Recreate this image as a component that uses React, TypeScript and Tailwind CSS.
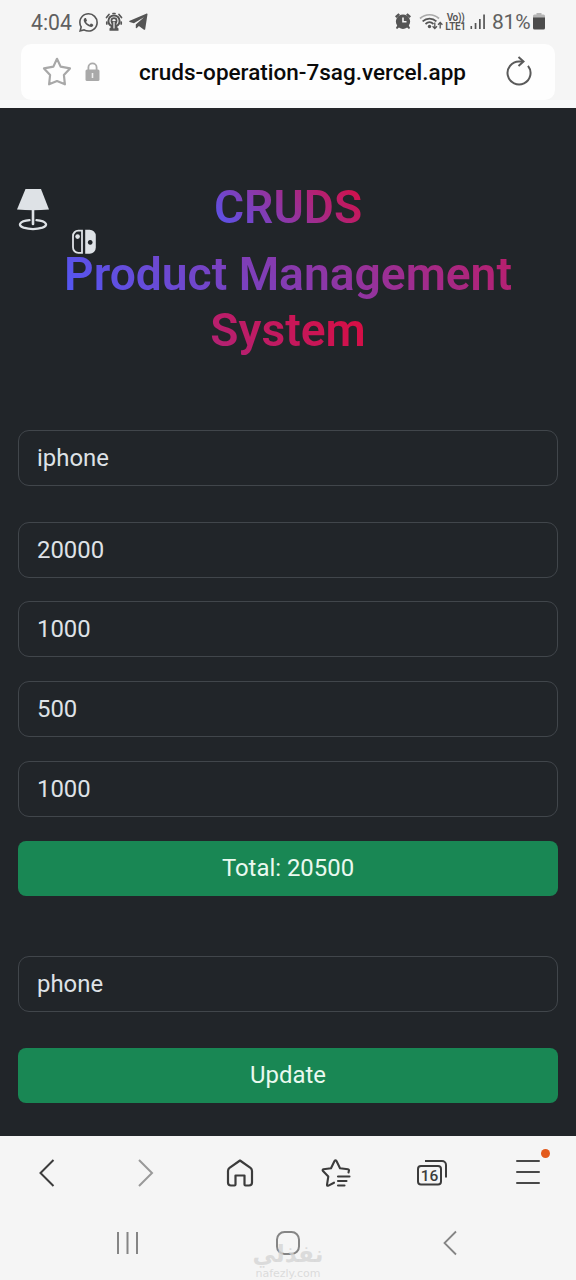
import type { ReactNode } from "react";
import { BsWhatsapp } from "react-icons/bs";

function StatusBar() {
  return (
    <div className="flex h-11 items-center pl-[31px] pr-[30px] text-[#555]">
      <span className="w-[48px] text-[21.200px] leading-[43px] text-[#606060]">4:04</span>
      <BsWhatsapp className="size-[19px]" />
      <svg className="ml-[7px]" width="18" height="20" viewBox="0 0 18 20" fill="none" stroke="currentColor" strokeWidth="1.7" strokeLinecap="round">
        <circle cx="9" cy="9" r="5.600" strokeWidth="2" />
        <circle cx="9" cy="8.800" r="2.600" />
        <path d="M1.500 5.500 4 2.500M16.500 5.500 14 2.500M8 1.500h2M1.800 10V12M16.200 10V12" />
        <path d="M4.500 18.800V16.500L6.500 14.500V9h5v5.500l2 2v2.300Z" fill="currentColor" stroke="none" />
        <path d="M9 10v6" stroke="#f5f5f5" strokeWidth="1.200" />
      </svg>
      <svg className="ml-[6px]" width="19" height="18" viewBox="0 0 19 18" fill="currentColor">
        <path d="M18.500 1.200 16.200 16.200c-.1.700-.7.800-1.200.5L9.900 13l-2.300 2.300-.8-.4V11.600L15 4.200 4.900 10.200.7 8.900c-.8-.3-.8-.9.1-1.200L17.200.7c.8-.3 1.400-.1 1.300.5Z" />
      </svg>
      <div className="ml-auto flex items-center">
        <svg className="-mt-[2px]" width="16" height="17" viewBox="0 0 16 17" fill="currentColor">
          <path d="M0 3.300 3.400.3 5 1.800 1.400 5zM16 3.300 12.600.3 11 1.800 14.600 5z" />
          <path fillRule="evenodd" d="M8 1.500a7 7 0 0 1 5.800 11l1.300 2.500-1.200 1-1.800-1.600a7 7 0 0 1-8.200 0L2.100 16 .9 15l1.300-2.500A7 7 0 0 1 8 1.500Zm-.8 3.100v4.800h4.300V7.900H8.800V4.600Z" />
        </svg>
        <svg className="ml-[8px]" width="24" height="18" viewBox="0 0 24 18" fill="none" stroke="currentColor" strokeWidth="1.700">
          <path d="M1 5.500C6.500.500 14.500.500 20 5.500" stroke="#aaa" />
          <path d="M3.600 8.300c4-3.700 9.800-3.700 13.800 0M6.500 11c2.400-2.200 5.600-2.200 8 0" />
          <circle cx="10.500" cy="13.500" r="1.700" fill="currentColor" stroke="none" />
          <path d="M15.800 9.500v6M13.600 13.300l2.200 2.300 2.200-2.300M21.200 15.500V9.700M19 11.800l2.200-2.300 2.200 2.300" strokeWidth="1.300" />
        </svg>
        <div className="ml-[2px] w-[21px] text-center text-[10px] font-semibold leading-[9px]">
          <div className="whitespace-nowrap tracking-[-0.300px]">Vo))</div>
          <div className="tracking-[-0.300px]">LTE1</div>
        </div>
        <svg className="ml-[4px] -mt-[1px]" width="16" height="16" viewBox="0 0 16 16" fill="currentColor">
          <path d="M.5 12h1.600v3H.5zM4.700 9h1.700V15H4.700zM9 5h1.700V15H9zM13.200.5h1.700V15h-1.700z" />
        </svg>
        <span className="ml-[6px] w-[41px] whitespace-nowrap text-[21px] leading-[44px] tracking-[-0.200px] text-[#606060]">81%</span>
        <svg className="mr-[1px] -mt-[2px]" width="12" height="17" viewBox="0 0 12 17" fill="#4c4c4c">
          <path d="M3.500 0h5v1.500h2A1.500 1.500 0 0 1 12 3v2H0V3a1.500 1.500 0 0 1 1.500-1.500h2Z" fill="#b5b5b5" />
          <path d="M0 4.500h12V15a1.500 1.500 0 0 1-1.500 1.500h-9A1.500 1.500 0 0 1 0 15Z" />
        </svg>
      </div>
    </div>
  );
}

function AddressBar() {
  return (
    <div className="mx-[21px] flex h-[56px] items-center rounded-[10px] bg-[#fefefe] pl-[21px] pr-[22px]">
      <svg width="30" height="30" viewBox="0 0 30 30" fill="none" stroke="#a8a8a8" strokeWidth="2.200" strokeLinejoin="round">
        <path d="M15 1.800 18.600 9.600 28 11.400 21.900 18 22.900 27.300 15 24 7.100 27.300 8.100 18 2 11.400 11.400 9.600Z" />
      </svg>
      <svg className="ml-[13px]" width="15" height="20" viewBox="0 0 15 20" fill="none">
        <path d="M3.400 9V5.500a4.100 4.100 0 0 1 8.200 0V9" stroke="#aaa" strokeWidth="1.800" />
        <rect x=".5" y="7.500" width="14" height="11.500" rx="1.500" fill="#a9a9a9" />
        <path d="M7.500 11v5" stroke="#eee" strokeWidth="1.600" />
      </svg>
      <span className="ml-[39px] whitespace-nowrap pt-[1px] text-[22.500px] font-medium text-[#0a0a0a]">cruds-operation-7sag.vercel.app</span>
      <svg className="-mt-[3px] ml-auto" width="28" height="30" viewBox="0 0 28 30" fill="none" stroke="#5a5a5a" strokeWidth="2">
        <path d="M18 5.500H14A11.500 11.500 0 1 0 23 9.800" />
        <path d="M13.500 1 18.500 5.500 13.500 10" />
      </svg>
    </div>
  );
}

function Field({ value, className = "" }: { value: string; className?: string }) {
  return (
    <input
      defaultValue={value}
      className={`block h-[56px] w-full rounded-[11px] border border-[#41464b] bg-[#212529] px-[18px] text-[23.900px] text-[#dee2e6] outline-none ${className}`}
    />
  );
}

function GreenButton({ children, className = "" }: { children: ReactNode; className?: string }) {
  return (
    <button className={`block h-[55px] w-full rounded-[8px] bg-[#198754] text-center text-[23.900px] leading-[55px] text-[#e9f9ef] ${className}`}>
      {children}
    </button>
  );
}

function Gradient({ children }: { children: ReactNode }) {
  return (
    <span className="bg-[linear-gradient(45deg,#5158f6,#dc0b3d)] bg-clip-text text-transparent">{children}</span>
  );
}

function Lamp() {
  return (
    <svg className="absolute left-[16px] top-[80px]" width="34" height="43" viewBox="0 0 34 43" fill="none" stroke="currentColor">
      <path d="M9.500 1h15.500L33 21.500Q17 23 1 21.500Z" fill="currentColor" stroke="none" />
      <path d="M17 21v15" strokeWidth="2.600" strokeLinecap="round" />
      <path d="M13.500 32.200C3 33.200 1.500 37.500 7.500 39.700Q17 42.500 26.500 39.700C32.500 37.500 31 33.200 20.500 32.200" strokeWidth="2.300" strokeLinecap="round" />
    </svg>
  );
}

function GameSwitch() {
  return (
    <svg className="absolute left-[71px] top-[121px]" width="26" height="26" viewBox="0 0 26 26">
      <path d="M7.500 1.700H11V23.800H7.500a5.300 5.300 0 0 1-5.500-5.500V7.200a5.300 5.300 0 0 1 5.500-5.500Z" fill="none" stroke="currentColor" strokeWidth="1.800" />
      <circle cx="6.600" cy="7.600" r="2.300" fill="currentColor" />
      <path fillRule="evenodd" d="M14.200.800H18.500a6.200 6.200 0 0 1 6.300 6.300V18.400a6.200 6.200 0 0 1-6.300 6.300H14.200ZM19.200 11a2.400 2.400 0 1 0 .01 0Z" fill="currentColor" />
    </svg>
  );
}

function ProductPage() {
  return (
    <main className="relative h-[1028px] bg-[#212529] px-[18px] pt-[71px] text-[#dee2e6]">
      <Lamp />
      <GameSwitch />
      <div className="relative text-center text-[46.200px] font-semibold leading-[56px]">
        <h1><Gradient>CRUDS</Gradient></h1>
        <h2 className="mt-[11px]"><Gradient>Product Management<br />System</Gradient></h2>
      </div>
      <Field value="iphone" className="mt-[72px]" />
      <Field value="20000" className="mt-[36px]" />
      <Field value="1000" className="mt-[23px]" />
      <Field value="500" className="mt-[24px]" />
      <Field value="1000" className="mt-[24px]" />
      <GreenButton className="mt-[24px]">Total: 20500</GreenButton>
      <Field value="phone" className="mt-[60px]" />
      <GreenButton className="mt-[36px]">Update</GreenButton>
    </main>
  );
}

function Toolbar() {
  return (
    <nav className="grid h-[74px] grid-cols-6 place-items-center text-[#3c3c3c]">
      <svg width="20" height="30" viewBox="0 0 20 30" fill="none" stroke="currentColor" strokeWidth="2"><path d="M15.500 2 2.500 15l13 13" /></svg>
      <svg width="20" height="30" viewBox="0 0 20 30" fill="none" stroke="#999" strokeWidth="2"><path d="M5 2 18 15 5 28" /></svg>
      <svg width="28" height="30" viewBox="0 0 28 30" fill="none" stroke="currentColor" strokeWidth="2.200" strokeLinejoin="round">
        <path d="M14 2.500 24.500 9.800Q26 11 26 13v11.500a3 3 0 0 1-3 3h-3.500a1 1 0 0 1-1-1V17.500h-9v9a1 1 0 0 1-1 1H5a3 3 0 0 1-3-3V13q0-2 1.500-3.200Z" />
      </svg>
      <svg width="30" height="30" viewBox="0 0 30 30" fill="none" stroke="currentColor" strokeWidth="2.100" strokeLinejoin="round" strokeLinecap="round">
        <path d="M27.500 14.500 28 12.300Q28 11.500 27 11.300L19 10.300 15.500 3Q14.500 1.500 13.500 3L10 10.300 2.500 11.300Q1 11.800 2 13L7.300 18.500 6 26.800Q6 28.300 7.500 27.600L13 24.700" />
        <path d="M17 18.500h11.500M17 23h8.500M17 27.500h6.500" />
      </svg>
      <svg width="30" height="28" viewBox="0 0 30 28" fill="none" stroke="currentColor" strokeWidth="2">
        <rect x="1" y="7" width="23" height="18.500" rx="3" />
        <path d="M8 2h17a4 4 0 0 1 4 4v12.500" />
        <text x="12.500" y="21.700" textAnchor="middle" fill="currentColor" stroke="none" className="text-[15.500px] font-medium">16</text>
      </svg>
      <div className="relative -top-px flex h-[24px] w-[24px] flex-col justify-between">
        <span className="h-[2px] rounded bg-[#484848]" />
        <span className="h-[2px] rounded bg-[#484848]" />
        <span className="h-[2px] rounded bg-[#484848]" />
        <span className="absolute right-[-10px] top-[-11px] size-[9px] rounded-full bg-[#e35a1c]" />
      </div>
    </nav>
  );
}

function SystemNav() {
  return (
    <div className="relative flex h-[70px] items-start justify-between pl-[116px] pr-[118px] pt-[20px]">
      <svg width="23" height="26" viewBox="0 0 23 26" stroke="#858585" strokeWidth="2"><path d="M2 2v22M11.500 2v22M21 2v22" /></svg>
      <svg className="mr-[5px]" width="26" height="26" viewBox="0 0 26 26" fill="none" stroke="#858585" strokeWidth="2"><rect x="2" y="2" width="22" height="22" rx="7.500" /></svg>
      <svg width="16" height="26" viewBox="0 0 16 26" fill="none" stroke="#858585" strokeWidth="1.800"><path d="M14 1.500 2.500 13 14 24.500" /></svg>
      <div className="absolute left-[252px] top-[28px] flex w-[72px] flex-col items-center text-[#d4d4d4]/80">
        <div dir="rtl" className="h-[30px] whitespace-nowrap font-['DejaVu_Sans',sans-serif] text-[23.200px] font-bold leading-[31px]">نفذلي</div>
        <div className="whitespace-nowrap font-['DejaVu_Sans',sans-serif] text-[11px] leading-[11px]">nafezly.com</div>
      </div>
    </div>
  );
}

export default function App() {
  return (
    <div className="h-[1280px] w-[576px] overflow-hidden bg-[#f5f5f5] font-['Roboto',sans-serif]">
      <header className="h-[108px]">
        <StatusBar />
        <AddressBar />
        <div className="h-[8px] bg-[#f7f9fa]" />
      </header>
      <ProductPage />
      <Toolbar />
      <SystemNav />
    </div>
  );
}
